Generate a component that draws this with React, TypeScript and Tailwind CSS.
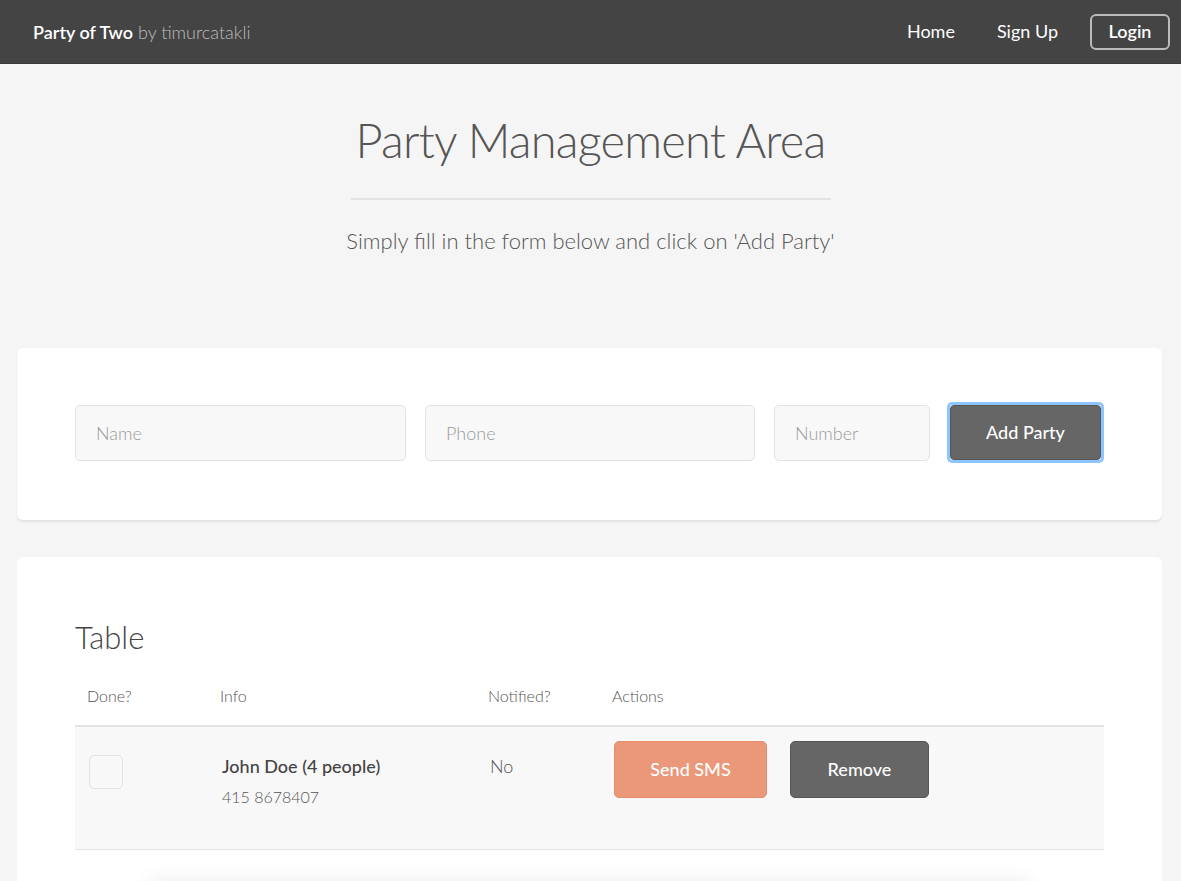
import { useState } from 'react';

const font = { fontFamily: 'Lato, "Open Sans", sans-serif' };

const Navbar = () => (
  <nav className="h-16 bg-[#444444] border-b border-[#3a3a3a] flex items-center justify-between pl-[33px] pr-[11px]">
    <div className="text-[18px] leading-none">
      <span className="text-white font-semibold">Party of Two</span>
      <span className="text-[#bdbdbd] font-light"> by timurcatakli</span>
    </div>
    <div className="flex items-center text-[18px] text-white">
      <a href="#" className="mr-[42px]">Home</a>
      <a href="#" className="mr-[32px]">Sign Up</a>
      <a href="#" className="h-9 w-20 flex items-center justify-center border-2 border-[#bbbbbb] rounded-md font-semibold">
        Login
      </a>
    </div>
  </nav>
);

const inputCls =
  'h-14 bg-[#f8f8f8] border border-[#e3e3e3] rounded-[5px] px-5 text-[18px] font-light text-[#555] placeholder:text-[#9a9a9a] outline-none';

const App = () => {
  const [done, setDone] = useState(false);

  return (
    <div className="min-h-screen bg-[#f5f5f5] overflow-hidden" style={font}>
      <Navbar />

      <header className="flex flex-col items-center pt-[44px]">
        <h1 className="text-[47px] font-light text-[#555] leading-[64px] tracking-[-0.8px]">Party Management Area</h1>
        <div className="w-[480px] h-[2px] bg-[#e3e3e3] mt-[26px]" />
        <p className="mt-[26px] text-[22px] font-light text-[#555] leading-[30px]">
          Simply fill in the form below and click on 'Add Party'
        </p>
      </header>

      <section className="ml-[17px] mr-[19px] mt-[92px] bg-white rounded-md shadow-[0_2px_2px_rgba(0,0,0,0.08)] px-[58px] pt-[54px] pb-[57px]">
        <form className="flex items-center" onSubmit={(e) => e.preventDefault()}>
          <input className={`${inputCls} w-[331px]`} placeholder="Name" />
          <input className={`${inputCls} w-[330px] ml-[19px]`} placeholder="Phone" />
          <input className={`${inputCls} w-[156px] ml-[19px]`} placeholder="Number" />
          <button
            type="submit"
            className="ml-[17px] w-[157px] h-[61px] rounded-[5px] border-[3px] border-[#8ec5ff] p-0 bg-white"
          >
            <span className="flex w-full h-full items-center justify-center bg-[#666666] border border-[#555] rounded-[4px] text-white text-[18px] font-medium">
              Add Party
            </span>
          </button>
        </form>
      </section>

      <section className="ml-[17px] mr-[19px] mt-[37px] bg-white rounded-md px-[58px] pt-[60px] pb-[31px]">
        <h2 className="text-[31px] font-light text-[#444] leading-[40px]">Table</h2>
        <table className="w-full mt-[27px] text-[#555] border-collapse">
          <thead>
            <tr className="border-b-2 border-[#e3e3e3] text-[16px] font-light text-left">
              <th className="font-light w-[133px] pl-3 pb-[17px]">Done?</th>
              <th className="font-light w-[268px] pl-3 pb-[17px]">Info</th>
              <th className="font-light w-[124px] pl-3 pb-[17px]">Notified?</th>
              <th className="font-light pl-3 pb-[17px]">Actions</th>
            </tr>
          </thead>
          <tbody>
            <tr className="bg-[#f8f8f8] border-b border-[#e3e3e3] align-top">
              <td className="pl-[14px] pt-[28px] h-[123px]">
                <button
                  onClick={() => setDone(!done)}
                  className="block w-[34px] h-[34px] bg-[#f8f8f8] border border-[#e3e3e3] rounded-[5px]"
                />
              </td>
              <td className="pl-[14px] pt-[27px]">
                <div className="text-[18px] font-medium text-[#444] leading-6">John Doe (4 people)</div>
                <div className="text-[16px] font-light leading-6 mt-[7px]">415 8678407</div>
              </td>
              <td className="pl-[14px] pt-[27px] text-[18px] font-light leading-6">No</td>
              <td className="pl-[14px] pt-[14px]">
                <div className="flex">
                  <button className="w-[153px] h-[57px] rounded-[5px] bg-[#ea977a] border border-[#e58c6c] text-white text-[18px] font-medium">
                    Send SMS
                  </button>
                  <button className="ml-[23px] w-[139px] h-[57px] rounded-[5px] bg-[#666666] border border-[#555] text-white text-[18px] font-medium">
                    Remove
                  </button>
                </div>
              </td>
            </tr>
          </tbody>
        </table>
        <div className="mx-[75px] mt-[36px] h-8 bg-white shadow-[0_-4px_22px_rgba(0,0,0,0.09)]" />
      </section>
    </div>
  );
};

export default App;
